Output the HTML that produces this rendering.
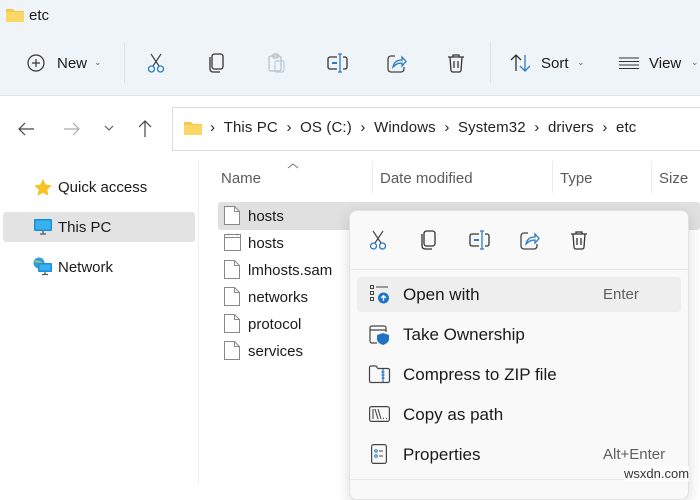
<!DOCTYPE html>
<html><head><meta charset="utf-8"><style>
*{margin:0;padding:0;box-sizing:border-box}
body{width:700px;height:484px;overflow:hidden;background:#fff;font-family:"Liberation Sans",sans-serif;color:#1a1a1a;position:relative}
.a{position:absolute}
.t{font-size:15px;white-space:nowrap}
svg{position:absolute;overflow:visible}
</style></head><body>
<div class="a" style="left:0;top:0;width:700px;height:96px;background:#eff4f9;border-bottom:1px solid #dde1e6"></div>
<svg style="left:6px;top:8px" width="18" height="14"><path d="M0 1h7l2 2h9v11H0z" fill="#f4c74d"/><path d="M0 4h18v10H0z" fill="#fbd766"/></svg>
<div class="a t" style="left:29px;top:7px">etc</div>
<svg style="left:27px;top:54px" width="18" height="18"><circle cx="9" cy="9" r="8" fill="none" stroke="#333" stroke-width="1.2"/><path d="M9 5v8M5 9h8" stroke="#333" stroke-width="1.2"/></svg>
<div class="a t" style="left:57px;top:55px">New</div>
<div class="a" style="left:94px;top:57px;font-size:9px;color:#666">&#8964;</div>
<div class="a" style="left:124px;top:43px;width:1px;height:40px;background:#dde1e6"></div>
<svg style="left:147px;top:53px" width="18" height="20"><path d="M4 1l8 12M14 1l-8 12" stroke="#444" stroke-width="1.2" fill="none"/><circle cx="4.5" cy="16" r="3" fill="none" stroke="#2b7bc4" stroke-width="1.3"/><circle cx="13.5" cy="16" r="3" fill="none" stroke="#2b7bc4" stroke-width="1.3"/></svg>
<svg style="left:209px;top:53px" width="16" height="20"><rect x="3" y="1" width="11" height="15" rx="2.5" fill="none" stroke="#333" stroke-width="1.3"/><path d="M1 4v12a3 3 0 0 0 3 3h7" fill="none" stroke="#333" stroke-width="1.3"/></svg>
<svg style="left:268px;top:53px" width="18" height="20"><rect x="1" y="3" width="12" height="15" rx="2" fill="none" stroke="#bbb" stroke-width="1.2"/><rect x="5" y="1" width="5" height="4" rx="1" fill="none" stroke="#bbb" stroke-width="1.2"/><rect x="7" y="8" width="9" height="11" rx="1.5" fill="none" stroke="#b5cfe6" stroke-width="1.2"/></svg>
<svg style="left:327px;top:53px" width="22" height="20"><path d="M10 4H3a2 2 0 0 0-2 2v8a2 2 0 0 0 2 2h7M16 4h2a2 2 0 0 1 2 2v8a2 2 0 0 1-2 2h-2" fill="none" stroke="#333" stroke-width="1.3"/><path d="M5 10h5" stroke="#2b7bc4" stroke-width="2"/><path d="M13 1v18M11 1h4M11 19h4" stroke="#2b7bc4" stroke-width="1.3"/></svg>
<svg style="left:387px;top:53px" width="20" height="20"><path d="M8 3H4a3 3 0 0 0-3 3v10a3 3 0 0 0 3 3h10a3 3 0 0 0 3-3v-2" fill="none" stroke="#444" stroke-width="1.3"/><path d="M6 14c1-5 4-7 9-7V4l4 4.5-4 4.5V10c-4 0-6 1-9 4z" fill="none" stroke="#2b7bc4" stroke-width="1.3"/></svg>
<svg style="left:447px;top:53px" width="18" height="20"><path d="M1 4h16M6 4V2h6v2M3 4l1 13a2 2 0 0 0 2 2h6a2 2 0 0 0 2-2l1-13M7 8v7M11 8v7" fill="none" stroke="#333" stroke-width="1.3"/></svg>
<div class="a" style="left:490px;top:43px;width:1px;height:40px;background:#dde1e6"></div>
<svg style="left:510px;top:54px" width="22" height="18"><path d="M6 17V1M1 6l5-5 5 5" fill="none" stroke="#333" stroke-width="1.3"/><path d="M15 1v16M10 12l5 5 5-5" fill="none" stroke="#2b7bc4" stroke-width="1.3"/></svg>
<div class="a t" style="left:541px;top:55px">Sort</div>
<div class="a" style="left:577px;top:57px;font-size:9px;color:#666">&#8964;</div>
<svg style="left:619px;top:57px" width="20" height="12"><path d="M0 1h20M0 4.5h20M0 8h20M0 11.5h20" stroke="#333" stroke-width="1.1"/></svg>
<div class="a t" style="left:649px;top:55px">View</div>
<div class="a" style="left:691px;top:57px;font-size:9px;color:#666">&#8964;</div>
<svg style="left:18px;top:122px" width="16" height="14"><path d="M16 7H1M7 1L1 7l6 6" fill="none" stroke="#444" stroke-width="1.2"/></svg>
<svg style="left:64px;top:122px" width="16" height="14"><path d="M0 7h15M9 1l6 6-6 6" fill="none" stroke="#aaa" stroke-width="1.2"/></svg>
<svg style="left:105px;top:126px" width="8" height="5"><path d="M0 0l4 4 4-4" fill="none" stroke="#555" stroke-width="1.1"/></svg>
<svg style="left:138px;top:120px" width="14" height="17"><path d="M7 17V1M1 7l6-6 6 6" fill="none" stroke="#444" stroke-width="1.2"/></svg>
<div class="a" style="left:172px;top:107px;width:540px;height:44px;border:1px solid #dcdcdc;background:#fff"></div>
<svg style="left:184px;top:121px" width="18" height="14"><path d="M0 1h7l2 2h9v11H0z" fill="#f4c74d"/><path d="M0 4h18v10H0z" fill="#fbd766"/></svg>
<div class="a" style="left:210px;top:119px;color:#222;font-size:15px;white-space:nowrap;letter-spacing:.12px">›&nbsp;&nbsp;This PC&nbsp;&nbsp;›&nbsp;&nbsp;OS (C:)&nbsp;&nbsp;›&nbsp;&nbsp;Windows&nbsp;&nbsp;›&nbsp;&nbsp;System32&nbsp;&nbsp;›&nbsp;&nbsp;drivers&nbsp;&nbsp;›&nbsp;&nbsp;etc</div>
<div class="a" style="left:198px;top:160px;width:1px;height:324px;background:#f0f0f0"></div>
<svg style="left:34px;top:179px" width="18" height="17"><path d="M9 0l2.7 5.6 6.1.8-4.5 4.2 1.1 6.1L9 13.8l-5.4 2.9 1.1-6.1L.2 6.4l6.1-.8z" fill="#f7c325"/></svg>
<div class="a t" style="left:58px;top:179px">Quick access</div>
<div class="a" style="left:3px;top:212px;width:192px;height:30px;background:#e3e3e3;border-radius:3px"></div>
<svg style="left:34px;top:219px" width="18" height="16"><rect x="0" y="0" width="18" height="12" rx="1" fill="#1d8fd8"/><rect x="1.5" y="1.5" width="15" height="9" fill="#38b1f0"/><path d="M6 15h6M9 12v3" stroke="#555" stroke-width="1.2"/></svg>
<div class="a t" style="left:58px;top:219px">This PC</div>
<svg style="left:33px;top:257px" width="20" height="18"><circle cx="6" cy="6" r="5.5" fill="#3a9ad9"/><path d="M2 4c2 1 4 0 6 2s-1 4 1 5" stroke="#8fd06b" stroke-width="2" fill="none"/><rect x="5" y="6" width="14" height="9" rx="1" fill="#1d8fd8"/><rect x="6.5" y="7.5" width="11" height="6" fill="#38b1f0"/><path d="M9 17.5h6M12 15v2.5" stroke="#555" stroke-width="1.2"/></svg>
<div class="a t" style="left:58px;top:259px">Network</div>
<svg style="left:288px;top:163px" width="10" height="6"><path d="M0 5l5-4 5 4" fill="none" stroke="#777" stroke-width="1"/></svg>
<div class="a t" style="left:221px;top:170px;color:#5b5b5b">Name</div>
<div class="a" style="left:372px;top:161px;width:1px;height:32px;background:#ececec"></div>
<div class="a t" style="left:380px;top:170px;color:#5b5b5b">Date modified</div>
<div class="a" style="left:552px;top:161px;width:1px;height:32px;background:#ececec"></div>
<div class="a t" style="left:560px;top:170px;color:#5b5b5b">Type</div>
<div class="a" style="left:651px;top:161px;width:1px;height:32px;background:#ececec"></div>
<div class="a t" style="left:659px;top:170px;color:#5b5b5b">Size</div>
<div class="a" style="left:218px;top:202px;width:482px;height:28px;background:#e0e0e0;border-radius:3px"></div>
<svg style="left:224px;top:206px" width="16" height="19"><path d="M.5.5h10l5 5v13H.5z" fill="#fff" stroke="#888"/><path d="M10.5.5v5h5" fill="none" stroke="#888"/></svg>
<div class="a t" style="left:248px;top:208px">hosts</div>
<svg style="left:224px;top:233px" width="17" height="18"><rect x=".5" y="1.5" width="16" height="16" fill="#fff" stroke="#888"/><path d="M.5 4.5h16M4 .5v2M13 .5v2" stroke="#888"/></svg>
<div class="a t" style="left:248px;top:235px">hosts</div>
<svg style="left:224px;top:260px" width="16" height="19"><path d="M.5.5h10l5 5v13H.5z" fill="#fff" stroke="#888"/><path d="M10.5.5v5h5" fill="none" stroke="#888"/></svg>
<div class="a t" style="left:248px;top:262px">lmhosts.sam</div>
<svg style="left:224px;top:287px" width="16" height="19"><path d="M.5.5h10l5 5v13H.5z" fill="#fff" stroke="#888"/><path d="M10.5.5v5h5" fill="none" stroke="#888"/></svg>
<div class="a t" style="left:248px;top:289px">networks</div>
<svg style="left:224px;top:314px" width="16" height="19"><path d="M.5.5h10l5 5v13H.5z" fill="#fff" stroke="#888"/><path d="M10.5.5v5h5" fill="none" stroke="#888"/></svg>
<div class="a t" style="left:248px;top:316px">protocol</div>
<svg style="left:224px;top:341px" width="16" height="19"><path d="M.5.5h10l5 5v13H.5z" fill="#fff" stroke="#888"/><path d="M10.5.5v5h5" fill="none" stroke="#888"/></svg>
<div class="a t" style="left:248px;top:343px">services</div>
<div class="a" style="left:349px;top:210px;width:340px;height:290px;background:#f9f9f9;border:1px solid #e2e2e2;border-radius:8px;box-shadow:0 4px 14px rgba(0,0,0,.14)"></div>
<svg style="left:369px;top:230px" width="18" height="20"><path d="M4 1l8 12M14 1l-8 12" stroke="#444" stroke-width="1.2" fill="none"/><circle cx="4.5" cy="16" r="3" fill="none" stroke="#2b7bc4" stroke-width="1.3"/><circle cx="13.5" cy="16" r="3" fill="none" stroke="#2b7bc4" stroke-width="1.3"/></svg>
<svg style="left:421px;top:230px" width="16" height="20"><rect x="3" y="1" width="11" height="15" rx="2.5" fill="none" stroke="#333" stroke-width="1.3"/><path d="M1 4v12a3 3 0 0 0 3 3h7" fill="none" stroke="#333" stroke-width="1.3"/></svg>
<svg style="left:469px;top:230px" width="22" height="20"><path d="M10 4H3a2 2 0 0 0-2 2v8a2 2 0 0 0 2 2h7M16 4h2a2 2 0 0 1 2 2v8a2 2 0 0 1-2 2h-2" fill="none" stroke="#333" stroke-width="1.3"/><path d="M5 10h5" stroke="#2b7bc4" stroke-width="2"/><path d="M13 1v18M11 1h4M11 19h4" stroke="#2b7bc4" stroke-width="1.3"/></svg>
<svg style="left:520px;top:230px" width="20" height="20"><path d="M8 3H4a3 3 0 0 0-3 3v10a3 3 0 0 0 3 3h10a3 3 0 0 0 3-3v-2" fill="none" stroke="#444" stroke-width="1.3"/><path d="M6 14c1-5 4-7 9-7V4l4 4.5-4 4.5V10c-4 0-6 1-9 4z" fill="none" stroke="#2b7bc4" stroke-width="1.3"/></svg>
<svg style="left:570px;top:230px" width="18" height="20"><path d="M1 4h16M6 4V2h6v2M3 4l1 13a2 2 0 0 0 2 2h6a2 2 0 0 0 2-2l1-13M7 8v7M11 8v7" fill="none" stroke="#333" stroke-width="1.3"/></svg>
<div class="a" style="left:350px;top:269px;width:338px;height:1px;background:#e5e5e5"></div>
<div class="a" style="left:357px;top:277px;width:324px;height:35px;background:#eeeeee;border-radius:4px"></div>
<svg style="left:370px;top:285px" width="20" height="20"><rect x=".5" y=".5" width="3" height="3" fill="none" stroke="#444"/><rect x=".5" y="6.5" width="3" height="3" fill="none" stroke="#444"/><rect x=".5" y="12.5" width="3" height="3" fill="none" stroke="#444"/><path d="M6 2h12" stroke="#444"/><circle cx="13.5" cy="13" r="5.5" fill="#1f73c5"/><path d="M13.5 16v-5.5M11 13l2.5-2.5 2.5 2.5" stroke="#fff" stroke-width="1.3" fill="none"/></svg>
<div class="a" style="left:403px;top:285px;font-size:17px">Open with</div>
<div class="a t" style="left:603px;top:286px;color:#5f5f5f">Enter</div>
<svg style="left:369px;top:325px" width="22" height="20"><path d="M8 18H3a2 2 0 0 1-2-2V3a2 2 0 0 1 2-2h12a2 2 0 0 1 2 2v4M1 5h16" fill="none" stroke="#444" stroke-width="1.2"/><path d="M14 8l6 2v4c0 3-3 5-6 6-3-1-6-3-6-6v-4z" fill="#1f73c5"/></svg>
<div class="a" style="left:403px;top:325px;font-size:17px">Take Ownership</div>
<svg style="left:369px;top:365px" width="21" height="18"><path d="M.5 3V16a1.5 1.5 0 0 0 1.5 1.5h17a1.5 1.5 0 0 0 1.5-1.5V5a1.5 1.5 0 0 0-1.5-1.5H9L7 1H2A1.5 1.5 0 0 0 .5 2.5z" fill="none" stroke="#444" stroke-width="1.2"/><path d="M14 4v13M12.5 7h3M12.5 10h3M12.5 13h3" stroke="#1f73c5" stroke-width="1.2"/></svg>
<div class="a" style="left:403px;top:365px;font-size:17px">Compress to ZIP file</div>
<svg style="left:369px;top:406px" width="21" height="16"><rect x=".6" y=".6" width="19.8" height="14.8" rx="2" fill="none" stroke="#444" stroke-width="1.2"/><path d="M4 3v10M6 3l3 10M9 3l3 10" stroke="#444" stroke-width="1.1"/><path d="M14 12.5h1M17 12.5h1" stroke="#444" stroke-width="1.3"/></svg>
<div class="a" style="left:403px;top:405px;font-size:17px">Copy as path</div>
<svg style="left:371px;top:444px" width="16" height="20"><rect x=".6" y=".6" width="14.8" height="18.8" rx="2" fill="none" stroke="#444" stroke-width="1.2"/><circle cx="5" cy="7" r="1.3" fill="none" stroke="#1f73c5"/><circle cx="5" cy="12" r="1.3" fill="none" stroke="#1f73c5"/><path d="M8 7h4M8 12h4" stroke="#444"/></svg>
<div class="a" style="left:403px;top:445px;font-size:17px">Properties</div>
<div class="a t" style="left:603px;top:446px;color:#5f5f5f">Alt+Enter</div>
<div class="a" style="left:350px;top:479px;width:338px;height:1px;background:#e5e5e5"></div>
<div class="a" style="left:624px;top:466px;font-size:13px;color:#333;background:rgba(255,255,255,.7)">wsxdn.com</div>
</body></html>
